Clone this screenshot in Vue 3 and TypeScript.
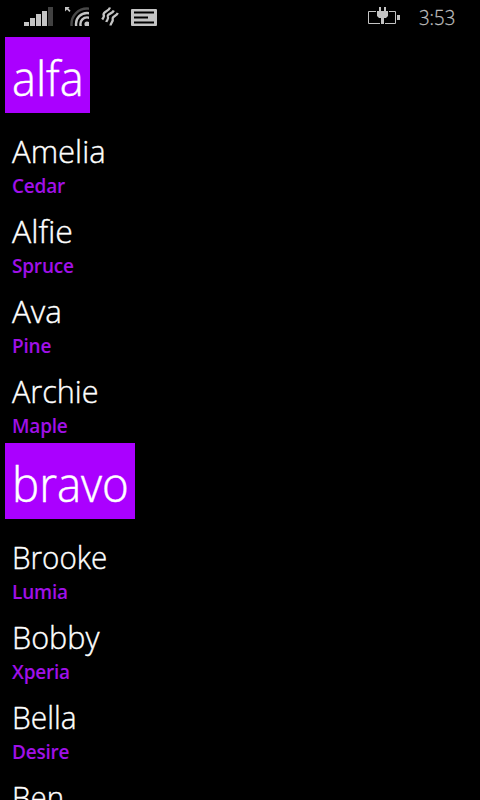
<script setup lang="ts">
interface Contact {
  name: string
  surname: string
}
interface Group {
  title: string
  width: number
  contacts: Contact[]
}

const groups: Group[] = [
  {
    title: 'alfa',
    width: 85,
    contacts: [
      { name: 'Amelia', surname: 'Cedar' },
      { name: 'Alfie', surname: 'Spruce' },
      { name: 'Ava', surname: 'Pine' },
      { name: 'Archie', surname: 'Maple' },
    ],
  },
  {
    title: 'bravo',
    width: 130,
    contacts: [
      { name: 'Brooke', surname: 'Lumia' },
      { name: 'Bobby', surname: 'Xperia' },
      { name: 'Bella', surname: 'Desire' },
      { name: 'Ben', surname: '' },
    ],
  },
]
</script>

<template>
  <main class="phone">
    <header class="status">
      <svg class="signal" width="29" height="19" viewBox="0 0 29 19">
        <path class="fill" d="M0 15h5v4H0zM6 11h5v8H6zM12 7h5v12h-5zM18 4h5v15h-5z" />
        <path class="dim" d="M24 0h5v19h-5z" />
      </svg>
      <svg class="wifi" width="24" height="19" viewBox="0 0 24 19">
        <path class="fill" d="M0 0h4.6L3.4 1.4 5.6 3.8 4.4 5 2 2.6 0 4.6z" />
        <g class="arcs">
          <circle class="faint" cx="22" cy="17" r="15.5" />
          <circle cx="22" cy="17" r="11" />
          <circle cx="22" cy="17" r="6.6" />
        </g>
        <circle class="fill" cx="22" cy="17" r="2.6" />
      </svg>
      <svg class="vibrate" width="18" height="20" viewBox="0 0 18 20">
        <path d="M9 .5C8 4.500 2.500 4 2.500 7.500C3.800 9.500 2.500 10.500 1.200 12.500" />
        <path d="M12.800 3.500C11.500 7 6 6.500 6.800 9.500C8.200 12 5.800 13 5.300 15" />
        <path d="M16.800 6C15.500 9 11 9.300 11.700 11.800C12.500 14.500 9.800 15.500 9.500 18.500" />
      </svg>
      <svg class="message" width="26" height="17" viewBox="0 0 26 17">
        <rect class="fill" width="26" height="17" rx="1" />
        <path d="M3 3.5h20M3 8.5h14M3 13.5h20" />
      </svg>
      <svg class="battery" width="32" height="18" viewBox="0 0 32 18">
        <path class="line" d="M8 4.5H.5v12H12M17 16.5h10.5v-12H21" />
        <path class="fill" d="M29 8h3v5h-3zM11 0h2v4h3V0h2v4h2v5l-2 2h-2v6h-3v-6h-2L9 9V4h2z" />
      </svg>
      <span class="clock">3:53</span>
    </header>

    <section v-for="group in groups" :key="group.title" class="group">
      <h2 class="title" :style="{ width: group.width + 'px' }">
        <span class="fit" :class="group.title">{{ group.title }}</span>
      </h2>
      <ul class="list">
        <li v-for="c in group.contacts" :key="c.name" class="row">
          <div class="name"><span class="fit" :class="c.name.toLowerCase()">{{ c.name }}</span></div>
          <div v-if="c.surname" class="surname">{{ c.surname }}</div>
        </li>
      </ul>
    </section>
  </main>
</template>

<style>
body {
  background: #000;
  overflow: hidden;
}
</style>

<style scoped>
.phone {
  width: 480px;
  height: 800px;
  overflow: hidden;
  background: #000;
  color: #fff;
  font-family: 'Open Sans', 'Noto Sans', sans-serif;
}
.status {
  display: flex;
  align-items: flex-start;
  box-sizing: border-box;
  height: 37px;
  padding: 7px 0 0 24px;
}
.status svg {
  flex: none;
}
.fill {
  fill: #c4c4c4;
  stroke: none;
}
.dim {
  fill: #414141;
}
.wifi {
  margin-left: 12px;
}
.arcs circle {
  fill: none;
  stroke: #c4c4c4;
  stroke-width: 2.4;
}
.arcs .faint {
  stroke: #484848;
}
.vibrate {
  margin-left: 12px;
}
.vibrate path {
  fill: none;
  stroke: #c4c4c4;
  stroke-width: 2.3;
}
.message {
  margin: 2px 0 0 12px;
}
.message path {
  stroke: #000;
  stroke-width: 2;
}
.battery {
  margin-left: 211px;
}
.battery .line {
  fill: none;
  stroke: #c4c4c4;
  stroke-width: 1;
}
.clock {
  margin: -3px 0 0 19px;
  color: #bdbdbd;
  font-size: 20px;
  font-weight: 300;
  line-height: 27px;
  transform: scaleX(0.93);
  transform-origin: left;
  -webkit-text-stroke: 0.3px #bdbdbd;
}
.title {
  box-sizing: border-box;
  height: 76px;
  margin: 0 0 10px 5px;
  padding: 8px 0 0 7px;
  background: #a0f;
  font-size: 48px;
  font-weight: 300;
  line-height: 66px;
  -webkit-text-stroke: 0.5px #fff;
}
.fit {
  display: inline-block;
  transform-origin: left;
}
.alfa {
  transform: scaleX(0.94);
}
.bravo {
  transform: scaleX(0.95);
}
.amelia {
  transform: scaleX(0.97);
}
.ava {
  transform: scaleX(0.98);
}
.archie {
  transform: scaleX(0.955);
}
.brooke {
  transform: scaleX(0.925);
}
.bobby {
  transform: scaleX(0.955);
}
.bella {
  transform: scaleX(0.935);
}
.ben {
  transform: scaleX(0.92);
}
.list {
  margin: 0;
  padding: 0;
  list-style: none;
}
.row {
  box-sizing: border-box;
  height: 80px;
  padding: 6px 0 0 12px;
}
.name {
  height: 44px;
  font-size: 32px;
  font-weight: 300;
  line-height: 44px;
  -webkit-text-stroke: 0.4px #fff;
}
.surname {
  color: #a010e8;
  font-size: 19px;
  font-weight: 600;
  line-height: 26px;
  letter-spacing: -0.2px;
}
</style>
